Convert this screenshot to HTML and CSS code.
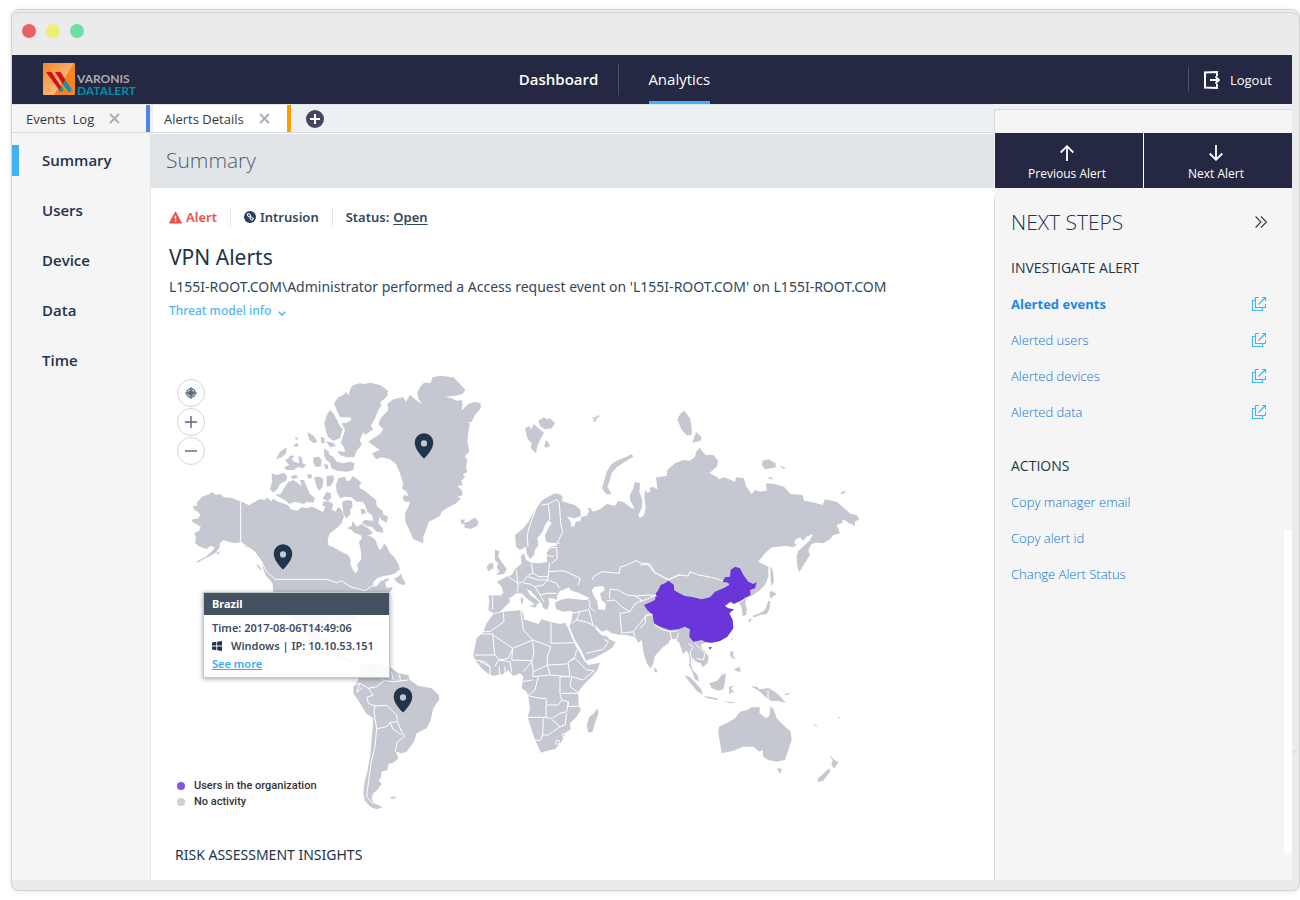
FILE: index.html
```html
<!DOCTYPE html>
<html lang="en">
<head>
<meta charset="utf-8">
<meta name="viewport" content="width=device-width, initial-scale=1">
<title>Varonis DatAlert</title>
<link rel="stylesheet" href="styles.css">
</head>
<body>
<svg class="defs" width="0" height="0" aria-hidden="true">
  <symbol id="external" viewBox="0 0 16 16"><path d="M8 1.500H4.500v10h10V8M11 1.500h3.500V5M14.500 1.500L7.500 8.500M4.500 4.500h-3v10h10v-3" fill="none" stroke="currentColor" stroke-width="1.100"/></symbol>
  <symbol id="close" viewBox="0 0 10 10"><path d="M1 1l8 8M9 1L1 9" stroke="currentColor" stroke-width="1.900" fill="none"/></symbol>
  <symbol id="pin" viewBox="0 0 20 26"><path fill-rule="evenodd" d="M10 .3a9.200 9.200 0 0 0-9.300 9.300C.7 16 6 21.500 10 25.600 14 21.500 19.300 16 19.300 9.600A9.200 9.200 0 0 0 10 .3zm0 7a3.100 3.100 0 1 1 0 6.200 3.100 3.100 0 0 1 0-6.200z"/></symbol>
</svg>

<div class="window">
  <div class="chrome"><span class="light red"></span><span class="light yellow"></span><span class="light green"></span></div>
  <div class="app">
    <header class="topbar">
      <a class="brand" href="#">
        <svg width="32" height="32" viewBox="0 0 32 32" aria-hidden="true">
          <defs><linearGradient id="lg" x2="1" y2="1"><stop offset="0" stop-color="#f6861f"/><stop offset=".55" stop-color="#fab171"/><stop offset="1" stop-color="#fbc08a"/></linearGradient></defs>
          <rect width="32" height="32" rx="1" fill="#f5861f"/>
          <path d="M1 0H31L11 32H1L0 31V1z" fill="url(#lg)"/>
          <path d="M3 9h5.500l11 17-2.500 2z" fill="#d0121b"/>
          <path d="M12 9h5.500l5 8-2.500 4.500z" fill="#d0121b"/>
          <path d="M22.500 17l-2.500 4.500L25 28.500c2 1.500 4.500-.5 3.500-2.500z" fill="#1594a9"/>
          <path d="M18.500 23l-2.500 5c1 1.500 4 1.500 4.500-1.500z" fill="#1594a9"/>
        </svg>
        <span class="brand-text"><span>VARONIS</span><span class="teal">DATALERT</span></span>
      </a>
      <nav class="mainnav">
        <a class="strong" href="#">Dashboard</a>
        <a class="current" href="#">Analytics</a>
      </nav>
      <a class="logout" href="#">
        <svg width="18" height="20" viewBox="0 0 18 20" fill="none" stroke="#fff" stroke-width="2" aria-hidden="true"><path d="M14 6V2L2 2.500v15L14 18v-4"/><path d="M7 10h8.500M12.500 6.500L16 10l-3.500 3.500" stroke-width="1.800"/></svg>
        Logout
      </a>
    </header>

    <div class="layout">
      <div class="left">
        <div class="tabs">
          <div class="tab tab-a"><a href="#">Events&nbsp; Log</a><button aria-label="Close Events Log"><svg width="11" height="11"><use href="#close"/></svg></button></div>
          <div class="tab tab-b"><a href="#">Alerts Details</a><button aria-label="Close Alerts Details"><svg width="11" height="11"><use href="#close"/></svg></button></div>
          <button class="add" aria-label="Add tab"><svg width="18" height="18" viewBox="0 0 18 18"><circle cx="9" cy="9" r="9" fill="#43465f"/><path d="M9 4v10M4 9h10" stroke="#fff" stroke-width="2"/></svg></button>
        </div>
        <div class="columns">
          <nav class="sidebar">
            <a class="active" href="#">Summary</a>
            <a href="#">Users</a>
            <a href="#">Device</a>
            <a href="#">Data</a>
            <a href="#">Time</a>
          </nav>
          <main class="main">
            <h1>Summary</h1>
            <div class="intro">
              <div class="meta">
                <span class="alert"><svg width="13" height="13" viewBox="0 0 14 13" aria-hidden="true"><path d="M7 .5L13.500 12.500H.5z" fill="#f04e4e" stroke="#f04e4e" stroke-linejoin="round"/><path d="M7 4.500v4M7 9.500v1.500" stroke="#fff" stroke-width="1.500"/></svg>Alert</span>
                <span><svg width="12" height="12" viewBox="0 0 12 12" aria-hidden="true"><circle cx="6" cy="6" r="6" fill="#2b3f58"/><g fill="none" stroke="#fff" stroke-width="1"><rect x="3" y="3.200" width="3.500" height="2.200" rx="1" transform="rotate(40 5 4.500)"/><rect x="5.800" y="6.400" width="3.500" height="2.200" rx="1" transform="rotate(40 7.500 7.500)"/></g></svg>Intrusion</span>
                <span>Status: <a href="#">Open</a></span>
              </div>
              <h2>VPN Alerts</h2>
              <p>L155I-ROOT.COM\Administrator performed a Access request event on 'L155I-ROOT.COM' on L155I-ROOT.COM</p>
              <a class="threat" href="#">Threat model info<svg width="8" height="5" viewBox="0 0 8 5" aria-hidden="true"><path d="M.7.7L4 4 7.300.7" fill="none" stroke="currentColor" stroke-width="1.500"/></svg></a>
            </div>

            <section class="map">
              <svg class="world" viewBox="151 324 843 500" role="img" aria-label="World map of alert locations">
                <g class="land">
                  <g transform="translate(160 360) scale(.33333)">
                    <path d="M98 438L112 437 110 428 126 410 148 402 157 396 167 405 180 402 192 412 215 414 225 418 242 424 255 430 266 436 280 428 300 418 315 420 322 412 332 424 342 416 350 424 368 430 385 436 392 448 412 452 425 442 440 444 456 440 470 446 490 456 495 440 486 435 492 424 505 424 520 432 515 448 526 455 535 440 545 450 552 470 545 488 535 500 520 512 508 522 503 540 505 555 520 562 535 570 550 578 565 585 572 600 572 615 580 632 588 640 594 630 592 612 604 598 603 575 600 560 597 545 606 535 600 520 630 528 645 538 650 550 658 570 668 562 672 550 682 562 690 580 702 590 715 612 720 628 705 640 690 645 670 648 650 655 638 668 632 682 650 678 662 664 680 656 690 656 675 668 680 684 698 680 696 688 688 700 340 700 338 672 330 660 318 648 310 628 305 605 295 590 285 575 272 565 258 562 250 552 242 546 225 550 208 546 190 540 180 550 178 565 165 580 150 588 130 598 112 608 110 604 135 592 155 575 165 562 150 558 140 568 125 562 112 556 105 548 108 530 102 520 118 512 122 500 108 492 95 484 98 478 112 476 122 466 114 456 104 450Z"/>
                    <path d="M572 85L580 75 600 70 615 72 630 68 660 75 684 92 682 108 660 128 665 134 655 150 645 175 632 198 640 208 615 225 610 216 600 240 605 255 590 272 583 292 560 292 540 285 532 272 555 276 552 262 542 248 548 232 555 210 545 190 560 188 575 180 570 172 540 172 530 150 522 130 535 112 550 105 558 95 565 106Z"/>
                    <path d="M510 150L520 160 530 178 538 195 548 208 540 235 520 242 505 232 498 215 493 190 500 165Z"/>
                    <path d="M505 283L520 290 530 305 550 310 570 305 583 310 580 330 560 335 530 332 515 325 510 308 496 298Z"/>
                    <path d="M345 404L362 402 372 385 385 366 400 360 412 368 425 378 420 360 432 360 440 380 445 390 450 402 465 415 460 428 440 425 432 432 405 425 388 432 375 420Z"/>
                    <path d="M335 340L350 345 372 338 382 350 378 362 360 372 352 388 340 398 330 388 336 365Z"/>
                    <path d="M375 300L392 292 402 305 418 310 415 288 425 292 428 310 438 315 430 325 415 320 400 330 380 330 372 322 388 315Z"/>
                    <path d="M348 298L360 275 380 262 378 280 365 292ZM400 256L412 248 416 256 408 262ZM405 230l9 4-6 8ZM442 216L462 228 472 245 462 250 448 240ZM482 230L494 235 494 250 484 248ZM498 244L520 248 528 258 510 262ZM460 292L478 290 485 300 482 320 465 320 460 308ZM492 265L507 275 505 300 493 290ZM492 312l12 2v12l-8 2ZM462 352L480 350 490 358 488 380 478 392 470 380ZM500 348L520 346 522 360 512 378 500 380ZM500 395L512 400 514 412 504 424 488 416ZM385 290l14-4 4 6-10 4ZM390 350l18-6 6 8-14 6ZM440 345l14-4 2 12-10 4Z"/>
                    <path d="M535 355L555 350 560 362 570 362 578 348 595 360 605 370 598 376 600 385 615 392 635 410 648 420 650 438 670 455 668 462 684 470 680 488 665 480 658 470 655 490 668 505 670 518 650 515 635 500 620 498 605 488 615 480 640 482 635 465 622 455 615 435 608 425 590 425 575 412 555 410 540 415 530 395 528 375Z"/>
                    <path d="M546 426L560 420 576 422 578 440 570 450 572 462 560 475 550 462ZM560 505L575 498 578 482 590 500 605 492 625 505 640 520 620 528 600 525 585 520 572 508ZM602 446l12 2 4 10-14 6ZM702 656L718 648 722 640 728 655 738 672 728 675 712 668ZM288 612L298 617 306 632 298 628ZM168 580l12-8-4 12Z"/>
                  </g>
                  <g transform="translate(360 360) scale(.33333)">
                    <path d="M25 245L40 235 60 222 70 208 55 192 62 175 85 150 82 132 100 118 130 112 138 125 150 104 165 118 185 132 175 115 172 98 180 82 192 68 212 68 218 52 240 47 280 52 300 72 316 90 308 102 285 108 255 110 275 115 290 122 305 120 308 135 304 152 325 132 345 125 362 130 362 145 345 165 335 185 320 188 330 190 325 215 322 245 328 275 315 288 322 300 318 320 322 335 308 345 316 350 304 362 308 375 292 378 305 390 308 405 290 412 304 415 285 432 265 442 245 455 240 468 222 478 206 485 200 505 190 530 190 549 178 545 160 538 148 510 136 485 135 460 145 440 150 425 135 425 128 415 132 405 145 408 140 395 125 385 130 372 120 340 108 312 90 298 65 292 48 298 36 280 60 270 45 260Z"/>
                    <path d="M302 480L315 478 312 488 325 485 345 472 355 485 352 498 330 507 312 502 315 494 303 490ZM495 205L510 198 512 210 522 192 530 200 552 218 540 240 532 258 528 280 518 270 512 262 515 250 502 235ZM535 182L552 172 562 178 570 175 585 190 575 205 555 208 540 198ZM558 240L565 247 570 259 558 263 553 257ZM692 173l14-2 12-6 0 6-8 4-4 12-6-4 2-8Z"/>
                  </g>
                  <g transform="translate(160 580) scale(.33333)">
                    <path d="M340 0L345 50 370 105 400 120 430 160 470 195 520 225 560 245 600 262 560 235 525 205 540 190 510 185 480 170 480 140 530 125 560 130 580 120 600 90 640 50 640 0Z"/>
                    <path d="M598 262L620 250 650 252 690 262 715 280 745 285 750 300 775 318 790 320 815 325 836 345 838 358 820 385 812 420 800 445 770 460 762 485 740 515 725 520 708 515 715 535 700 548 685 552 682 570 665 575 662 595 655 600 665 612 652 630 640 640 635 655 640 668 668 682 650 688 630 680 615 662 610 640 615 600 622 575 630 530 635 480 640 415 618 400 600 370 580 340 580 320 595 300 600 280Z"/>
                    <path d="M690 652L708 649 704 656 694 656Z"/>
                  </g>
                  <g transform="translate(460 380) scale(.33333)">
                    <path d="M165 465L190 445 205 425 220 400 240 365 265 350 285 340 300 343 308 350 305 362 325 370 345 375 362 390 362 408 345 415 328 412 320 408 332 425 335 442 345 436 346 426 362 422 364 410 380 408 388 392 380 385 392 385 400 395 420 388 440 372 455 375 465 378 475 362 490 366 515 385 524 386 510 360 510 345 520 325 525 305 540 310 538 335 547 360 545 385 535 405 540 414 552 405 557 385 553 350 555 330 562 338 572 334 568 325 578 320 592 328 588 292 620 288 622 270 645 250 670 240 690 242 705 230 708 215 720 203 728 215 738 225 760 225 773 240 772 258 748 280 770 290 778 298 790 292 800 295 825 305 828 292 852 295 858 318 875 343 885 330 900 335 920 332 918 310 945 312 972 320 992 342 1028 345 1032 362 1065 368 1088 375 1095 358 1130 365 1150 382 1172 402 1190 405 1198 418 1185 425 1185 438 1165 428 1150 418 1145 430 1130 435 1140 460 1120 465 1110 478 1090 490 1070 488 1055 492 1045 510 1050 525 1035 548 1018 577 1012 560 1010 530 1015 512 1035 495 1050 480 1060 462 1040 470 1030 482 1020 472 1005 480 1004 492 1012 494 998 502 980 497 955 500 935 502 915 520 895 545 915 555 925 560 925 590 915 615 900 630 880 645 862 652 855 668 861 688 858 705 848 708 845 685 838 668 830 660 820 672 808 664 795 678 805 686 822 688 808 700 818 722 818 745 802 770 780 783 755 789 735 788 722 795 728 808 738 818 746 832 744 848 728 862 722 850 708 845 700 835 695 838 692 850 698 870 712 885 717 905 705 898 695 870 687 855 690 840 685 820 680 812 668 822 664 805 655 790 650 780 640 776 630 780 625 790 610 800 585 828 580 850 572 866 560 850 550 815 545 780 535 788 525 772 500 765 480 765 455 760 440 750 425 755 402 732 408 748 425 766 440 768 448 778 467 787 455 805 430 820 400 835 378 842 365 812 345 780 328 740 335 720 338 700 335 692 310 695 288 688 285 668 300 660 325 655 350 658 375 660 390 655 375 648 355 638 335 632 325 622 310 630 300 632 292 645 290 660 280 655 265 655 268 670 262 690 250 685 245 670 232 655 212 632 200 628 210 645 225 655 240 668 232 672 226 685 220 670 200 655 185 640 170 640 155 650 148 655 150 665 135 680 120 695 100 700 85 690 88 665 85 645 120 645 130 640 125 620 110 605 125 598 140 590 155 585 165 568 185 550 182 530 192 520 198 540 215 548 240 550 262 545 260 520 270 500 288 498 292 490 270 488 258 485 255 465 265 445 275 430 265 420 255 435 248 455 232 475 235 495 225 510 222 525 210 538 200 520 198 500 180 510 168 500Z"/>
                    <path class="water" d="M405 620L430 618 435 630 420 640 425 660 438 672 435 690 415 688 412 665 400 645 395 630Z"/>
                    <path d="M105 510L118 512 115 530 128 550 140 568 132 582 108 585 118 575 110 562 115 550 104 540ZM88 550L100 550 100 565 85 574 80 562ZM207 676l18-1-2 8ZM182 655l6-4 2 18-6 2Z"/>
                    <path d="M515 222L520 230 495 245 470 262 455 280 448 305 442 320 455 343 438 342 426 325 432 305 440 275 455 252 475 240 500 230ZM673 92L690 115 695 140 695 165 680 166 665 150 652 118 662 100ZM708 155L725 172 722 182 697 188ZM908 242L925 238 947 250 947 262 915 268 906 255ZM958 256l20 8-8 3ZM923 296l10-6 7 8ZM1140 340l12-7 6 3-10 6Z"/>
                  </g>
                  <g transform="translate(460 480) scale(.33333)">
                    <path d="M100 402L130 395 165 392 182 390 190 400 192 418 215 425 235 432 245 418 270 425 300 432 315 428 322 440 335 470 348 500 360 520 375 545 385 555 420 548 412 570 395 590 370 615 355 635 355 670 362 690 350 710 330 730 332 748 315 760 305 785 285 808 262 812 242 818 235 800 225 780 215 750 203 712 210 685 205 650 200 635 185 625 188 605 190 590 180 580 160 588 145 570 130 582 100 587 85 582 65 565 45 540 40 525 45 500 50 475 70 455 80 430Z"/>
                    <path d="M412 685L415 700 405 730 398 755 385 758 380 735 388 710 402 700Z"/>
                  </g>
                  <g transform="translate(640 560) scale(.33333)">
                    <path d="M42 320L52 330 50 338 44 336ZM272 236l6-4-4 12ZM272 272L280 275 280 290 288 298 276 294 270 284ZM282 328L300 320 302 335 290 334ZM133 345L150 352 170 372 185 390 188 405 170 392 150 368ZM190 408L215 412 238 417 230 420 200 414ZM208 370L232 362 245 345 258 340 255 365 250 388 235 392 215 385ZM266 380L285 376 272 384 284 400 274 396 268 404ZM332 378L350 380 358 388 385 384 405 395 420 408 438 430 415 422 395 424 375 410 360 395ZM250 424l40 4-20 2ZM430 405l20-8-6 8ZM518 488l14 10-4 2ZM592 474l12-6-6 7Z"/>
                    <path d="M237 500L262 488 285 475 300 455 322 450 335 442 360 442 358 458 378 475 388 468 392 438 402 450 410 475 430 495 452 515 455 540 445 570 435 600 410 605 385 600 370 590 368 570 358 575 340 560 310 560 280 572 245 580 242 560 235 520Z"/>
                    <path d="M410 625L427 626 420 642ZM568 582L580 598 596 606 582 627 574 612 578 602ZM568 625L570 635 550 662 535 666 533 656ZM324 180L335 174 330 188ZM336 168L360 160 375 150 385 122 391 124 388 148 380 162 360 165 345 172ZM388 98L393 92 411 102 400 108 392 118ZM391 18L398 30 402 62 395 80 392 60Z"/>
                  </g>
                </g>
                <g class="china" transform="translate(640 560) scale(.33333)">
                  <path d="M12 135L28 128 45 120 48 100 55 90 62 75 75 70 85 62 102 75 102 90 115 98 135 108 160 112 185 118 210 112 225 95 250 85 268 75 265 68 248 65 255 52 270 50 272 30 285 20 300 25 310 45 325 65 340 72 350 66 345 85 330 90 332 105 310 118 282 132 272 125 255 138 265 145 282 148 268 160 278 180 280 205 262 230 240 243 215 248 195 245 185 240 160 245 148 230 150 208 135 200 115 208 90 210 60 200 42 190 38 165 22 150ZM206 262L216 261 210 269Z"/>
                </g>
                <g class="borders">
                  <g transform="translate(160 360) scale(.33333)"><path d="M242 424V546L262 560 285 578 305 605 318 632 345 658H500L530 668 545 662 570 680 615 692 640 676"/></g>
                  <g transform="translate(160 580) scale(.33333)"><path d="M580 316L600 310 625 325 650 320 672 302 700 305 745 300M650 260L655 285 672 302M694 275L700 300M718 284L722 303M625 325L640 345 620 352 625 370 645 378 680 376 710 405 712 425 690 428 680 440 650 446 645 415 642 390 646 376M712 425L725 455 735 468 712 485 706 515M690 428L700 448 725 465M650 446L645 500 635 540 626 600 620 650 640 672M600 310L590 338 608 322"/></g>
                  <g transform="translate(460 480) scale(.33333)">
                    <path d="M245 60L228 85 208 140 202 165 204 200M245 75L265 72 290 58 298 70 302 130 308 155 292 188M265 72L270 120M258 205L290 202 292 235 275 250M255 225L280 230M215 250L218 278 235 290 265 290 268 250M268 275L310 272 325 278 360 295 355 315M265 290L262 300 290 310 298 325M170 270L172 310 190 305 205 285 218 280M205 290L235 300 262 300M190 310L210 312 225 320 250 315 262 300M225 320L240 345 262 340 290 340M240 345L252 365M125 345L88 345M98 350V388M145 290L175 310 172 335M370 350L390 365 388 380 405 395M290 188L300 190"/>
                    <path d="M398 300L400 290 425 275 478 280 480 262 500 255 528 242 545 250 562 250 580 275 625 300 660 282M448 355L450 328 475 330 500 345 525 348 545 360 525 372 510 395 485 380 465 360 440 362M525 348L570 345 590 348M510 395L480 400 485 460 520 455 540 430 560 405 575 402M520 455L525 470M385 385L390 400 400 440M335 400L360 395 385 390M335 430L350 420 375 425 400 435M360 395L350 420M378 520L400 515 430 508 445 485 432 478"/>
                    <path d="M130 395L132 425 90 455 68 455M62 462H95L158 505 218 480 190 450 182 390M98 460L104 525 45 525M104 525L120 540 145 535 158 505M273 428V490L345 488M218 480L272 500 262 530 262 555 220 575 215 545 222 520ZM262 555L320 552 345 530 350 510M158 505L155 540 215 542M105 560L115 540 150 545 155 575M90 585V560L60 545M118 585V560M135 582V560M215 545L190 575M220 575L218 590 270 585 262 555M270 585L330 590 325 550M325 545L345 535 380 570 402 572 370 600 335 590 330 620 358 640M330 590L300 590V640L355 640M300 640L305 660 295 675 260 675 258 655 240 655 208 648M235 588L225 630 200 650M258 675V712L203 712M258 712L275 715 300 700 320 695 325 665 305 660M325 665L325 680 360 678M320 700L315 735 300 740 275 718M250 715L248 765 265 765 300 740M248 765L240 782 225 780M45 540L75 545 90 560M188 605L218 600"/>
                    <circle cx="293" cy="787" r="6"/><circle cx="312" cy="766" r="5"/>
                  </g>
                  <g transform="translate(640 560) scale(.33333)"><path d="M85 58L120 45 145 48 150 35 175 45 215 52 248 62M0 15L30 12 45 38 85 58M0 205L15 190 18 165 38 165M45 195L70 210 92 215 115 212M90 215L95 240 110 238 115 220M115 245L120 260M145 250L160 262 150 275 155 300M165 250L180 265 195 280 190 300 170 295M384 390V422M0 125L20 118 48 105M300 128L320 112"/></g>
                </g>
                <g class="pins">
                  <use href="#pin" x="414" y="433" width="20" height="26"/>
                  <use href="#pin" x="273" y="544" width="20" height="26"/>
                  <use href="#pin" x="393" y="687" width="20" height="26"/>
                </g>
              </svg>
              <div class="controls">
                <button aria-label="Center map"><svg width="12" height="12" viewBox="0 0 13 13"><g fill="none" stroke="#55677c"><circle cx="6.500" cy="6.500" r="4.500" stroke-width="1.500"/><path d="M6.500 0v13M0 6.500h13" stroke-width="1.200"/></g><circle cx="6.500" cy="6.500" r="3" fill="#55677c"/></svg></button>
                <button aria-label="Zoom in"><svg width="12" height="12" viewBox="0 0 12 12"><path d="M6 0v12M0 6h12" stroke="#55677c" stroke-width="1.400"/></svg></button>
                <button aria-label="Zoom out"><svg width="12" height="12" viewBox="0 0 12 12"><path d="M0 6h12" stroke="#55677c" stroke-width="1.400"/></svg></button>
              </div>
              <div class="tooltip">
                <h3>Brazil</h3>
                <div class="tooltip-body">
                  <div>Time: 2017-08-06T14:49:06</div>
                  <div class="os"><svg width="10" height="10" viewBox="0 0 10 10" aria-hidden="true"><path d="M0 1.500l4.300-.7v3.700H0zM5.200.7L10 0v4.500H5.200zM0 5.500h4.300v3.700L0 8.500zM5.200 5.500H10V10l-4.800-.7z" fill="#20344b"/></svg>Windows | IP: 10.10.53.151</div>
                  <a href="#">See more</a>
                </div>
              </div>
              <ul class="legend">
                <li><i class="users"></i>Users in the organization</li>
                <li><i></i>No activity</li>
              </ul>
            </section>
            <h2 class="risk">RISK ASSESSMENT INSIGHTS</h2>
          </main>
        </div>
      </div>

      <aside class="panel">
        <div class="pager">
          <button><svg width="14" height="16" viewBox="0 0 14 16" aria-hidden="true"><path d="M7 16V1.500M.7 7.500L7 1.200l6.300 6.300" fill="none" stroke="#fff" stroke-width="1.800"/></svg>Previous Alert</button>
          <button><svg width="14" height="16" viewBox="0 0 14 16" aria-hidden="true"><path d="M7 0v14.500M.7 8.500L7 14.800l6.300-6.300" fill="none" stroke="#fff" stroke-width="1.800"/></svg>Next Alert</button>
        </div>
        <div class="steps">
          <div class="steps-head"><h2>NEXT STEPS</h2><button aria-label="Collapse panel"><svg width="12" height="12" viewBox="0 0 12 12"><path d="M.6.5L6 6 .6 11.500M6 .5L11.400 6 6 11.500" fill="none" stroke="#343657" stroke-width="1.100"/></svg></button></div>
          <h3>INVESTIGATE ALERT</h3>
          <ul>
            <li><a class="bold" href="#">Alerted events<svg width="16" height="16"><use href="#external"/></svg></a></li>
            <li><a href="#">Alerted users<svg width="16" height="16"><use href="#external"/></svg></a></li>
            <li><a href="#">Alerted devices<svg width="16" height="16"><use href="#external"/></svg></a></li>
            <li><a href="#">Alerted data<svg width="16" height="16"><use href="#external"/></svg></a></li>
          </ul>
          <h3>ACTIONS</h3>
          <ul>
            <li><a href="#">Copy manager email</a></li>
            <li><a href="#">Copy alert id</a></li>
            <li><a href="#">Change Alert Status</a></li>
          </ul>
        </div>
        <div class="scroll"></div>
      </aside>
    </div>
  </div>
</div>
</body>
</html>
```
FILE: styles.css
```css
* { box-sizing: border-box; }
body { margin: 0; padding: 9px 0 9px 11px; background: #fff; color: #20344b; font-family: "Open Sans", "Noto Sans", sans-serif; font-size: 13px; line-height: 18px; }
h1, h2, h3, p, ul { margin: 0; padding: 0; font-weight: 400; }
ul { list-style: none; }
a { color: inherit; text-decoration: none; }
button { margin: 0; padding: 0; border: 0; background: none; color: inherit; font: inherit; cursor: pointer; }
svg { display: block; flex: none; }
.defs { position: absolute; }

.window { position: relative; display: flex; flex-direction: column; min-height: calc(100vh - 18px); padding: 0 7px 10px 0; border: 1px solid #d3d3d3; border-radius: 8px; background: #ebebeb; box-shadow: 0 1px 5px #e6e6e6; }
.window::before { content: ""; position: absolute; top: 2px; right: 0; bottom: 137px; left: 0; border: 1px solid #d3d3d3; border-width: 1px 0; border-radius: 8px; }
.chrome { display: flex; gap: 10px; height: 45px; padding: 14px 10px; }
.light { width: 14px; height: 14px; border-radius: 50%; }
.red { background: #e96263; }
.yellow { background: #eeee72; }
.green { background: #6cdfa5; }
.app { position: relative; display: flex; flex: 1; flex-direction: column; background: #ecf0f3; }

.topbar { display: grid; grid-template-columns: 1fr auto 1fr; align-items: center; height: 49px; padding: 0 20px 0 31px; background: #242842; color: #fff; }
.brand { display: flex; align-items: flex-start; gap: 2px; }
.brand-text { display: flex; flex-direction: column; padding-top: 10px; color: #aaaaad; font-family: Lato, sans-serif; font-size: 12px; font-weight: 700; line-height: 12px; }
.teal { color: #048ea5; }
.mainnav { display: flex; align-self: stretch; padding-right: 56px; font-size: 15px; }
.mainnav a { position: relative; display: flex; align-items: center; padding: 0 30px 2px; }
.mainnav .strong { padding-left: 0; padding-right: 20px; font-weight: 600; }
.mainnav .current::before { content: ""; position: absolute; top: 9px; left: 0; height: 31px; border-left: 1px solid #4b4e67; }
.mainnav .current::after { content: ""; position: absolute; right: 30px; bottom: 0; left: 31px; height: 3px; background: #3fb3f3; }
.logout { display: flex; justify-self: end; align-items: center; gap: 9px; height: 25px; padding-left: 14px; border-left: 1px solid #4b4e67; font-size: 13px; }

.layout { display: grid; flex: 1; grid-template-columns: minmax(0, 1fr) 298px; }
.left { display: flex; flex-direction: column; }
.tabs { display: flex; align-items: stretch; height: 29px; border-top: 1px solid #e2e4e6; border-bottom: 1px solid #d5dbe0; }
.tab { display: flex; align-items: center; gap: 15px; color: #333847; }
.tab svg { color: #a9b0bc; }
.tab-a { width: 138px; padding-left: 14px; border-right: 4px solid #5083ea; background: #f5f5f5; }
.tab-b { width: 138px; margin-left: 3px; padding-left: 11px; border-right: 4px solid #ff9b00; background: #fff; }
.add { margin-left: 15px; }
.columns { display: grid; flex: 1; grid-template-columns: 139px minmax(0, 1fr); }
.sidebar { display: flex; flex-direction: column; gap: 19px; padding-top: 12px; border-right: 1px solid #e2e6e9; background: #f5f5f5; font-size: 15px; font-weight: 600; }
.sidebar a { display: flex; align-items: center; height: 31px; padding: 0 0 2px 23px; border-left: 7px solid transparent; }
.sidebar .active { border-color: #3fb3f3; }
.main { background: #fff; }
.main h1 { padding: 12px 15px 13px; border-top: 1px solid #fff; background: #e1e5e8; color: #4f5d69; font-size: 21px; font-weight: 300; line-height: 29px; }
.intro { padding: 19px 18px 4px; color: #33475b; font-family: "Noto Sans", "Open Sans", sans-serif; }
.meta { display: flex; align-items: center; height: 20px; font-size: 13px; font-weight: 600; }
.meta > span { display: flex; align-items: center; gap: 4px; height: 20px; padding: 0 13px; border-right: 1px solid #e2e8ee; }
.meta > span:first-child { padding-left: 0; }
.meta > span:last-child { border: 0; }
.meta .alert { color: #f04e4e; }
.meta a { text-decoration: underline; text-underline-offset: 2px; }
.intro h2 { margin-top: 17px; font-size: 21px; line-height: 26px; color: #20344b; }
.intro p { margin-top: 7px; font-size: 14px; line-height: 20px; }
.threat { display: inline-flex; align-items: center; gap: 7px; margin-top: 5px; color: #4db9f5; font-size: 12px; font-weight: 500; }
.threat svg { margin-top: 4px; }

.map { position: relative; }
.world { width: 100%; height: auto; }
.land { fill: #c6c8d1; }
.water { fill: #fff; }
.china { fill: #6a35d9; }
.borders { fill: none; stroke: #fff; stroke-width: 3; stroke-linejoin: round; }
.pins { fill: #20344b; }
.controls { position: absolute; top: 55px; left: 26px; display: flex; flex-direction: column; gap: 1px; }
.controls button { display: grid; place-items: center; width: 28px; height: 28px; border: 1px solid #d5d5de; border-radius: 50%; background: #fff; }
.tooltip { position: absolute; top: 268px; left: 52px; width: 187px; border: 1px solid #c3c7cb; background: rgba(255, 255, 255, .9); box-shadow: 0 1px 5px rgba(0, 0, 0, .35); color: #3c4d60; font-family: "Noto Sans", "Open Sans", sans-serif; font-size: 11px; font-weight: 600; }
.tooltip h3 { padding: 2px 8px; background: #435161; color: #fff; font-size: 11px; font-weight: 700; }
.tooltip-body { padding: 4px 8px; }
.os { display: flex; align-items: center; gap: 9px; }
.tooltip a { color: #35adf0; text-decoration: underline; }
.legend { position: absolute; top: 454px; left: 26px; color: #333; font-family: Roboto, sans-serif; font-size: 11px; font-weight: 500; line-height: 16px; }
.legend li { display: flex; align-items: center; gap: 9px; }
.legend i { width: 8px; height: 8px; border-radius: 50%; background: #ced0d8; }
.legend .users { background: #8957dd; }
.risk { padding: 22px 24px 15px; font-family: "Noto Sans", "Open Sans", sans-serif; font-size: 14px; line-height: 18px; }

.panel { position: relative; margin-top: 5px; border-top: 1px solid #d3d9df; background: #f5f5f5; }
.panel::before { content: ""; position: absolute; top: 0; left: 0; height: 23px; border-left: 1px solid #d3d9df; }
.pager { display: grid; grid-template-columns: 1fr 1fr; gap: 1px; margin: 23px 0 0 1px; background: #fff; }
.pager button { display: flex; flex-direction: column; align-items: center; gap: 4px; height: 55px; padding: 12px 4px 0 0; background: #242842; color: #fff; font-size: 12px; line-height: 18px; }
.steps { margin-top: 10px; min-height: 682px; padding: 11px 25px 0 16px; border-left: 1px solid #d3d9df; }
.steps-head { display: flex; align-items: center; justify-content: space-between; }
.steps-head h2 { color: #20344b; font-size: 21px; font-weight: 300; line-height: 26px; }
.steps h3 { margin-top: 24px; font-size: 14px; line-height: 18px; }
.steps ul { padding-top: 9px; }
.steps li a { display: flex; align-items: center; justify-content: space-between; height: 36px; color: #0b74d4; font-size: 13px; font-weight: 300; }
.steps li svg { color: #3fb3f3; }
.steps li .bold { color: #1e88e0; font-weight: 700; }
.steps ul + h3 { margin-top: 27px; }
.scroll { position: absolute; right: 0; bottom: 27px; width: 8px; height: 323px; background: #fff; }
```
